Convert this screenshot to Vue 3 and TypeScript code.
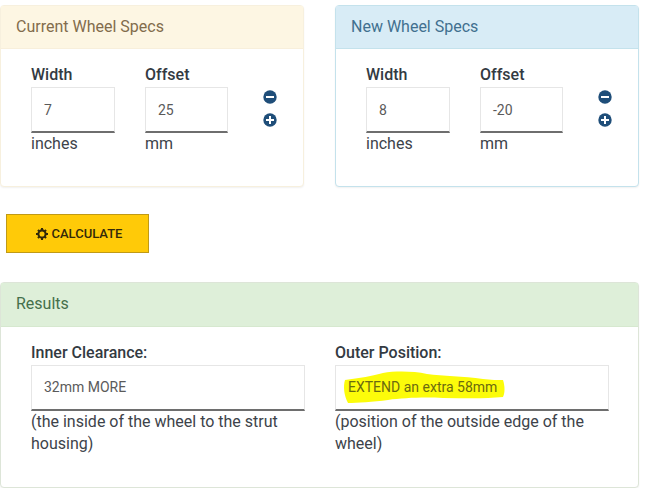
<script setup lang="ts">
import { ref } from "vue";

const specs = ref([
  { title: "Current Wheel Specs", kind: "warning", width: 7, offset: 25 },
  { title: "New Wheel Specs", kind: "info", width: 8, offset: -20 },
]);

const results = [
  { label: "Inner Clearance:", value: "32mm MORE", note: "(the inside of the wheel to the strut housing)", marked: false },
  { label: "Outer Position:", value: "EXTEND an extra 58mm", note: "(position of the outside edge of the wheel)", marked: true },
];
</script>

<template>
  <div class="page">
    <div class="spec-row">
      <section v-for="spec in specs" :key="spec.title" class="panel spec" :class="spec.kind">
        <header class="panel-head">{{ spec.title }}</header>
        <div class="spec-body">
          <div class="col col-width">
            <label>Width</label>
            <div class="field">{{ spec.width }}</div>
            <span class="unit">inches</span>
          </div>
          <div class="col col-offset">
            <label>Offset</label>
            <div class="field">{{ spec.offset }}</div>
            <span class="unit">mm</span>
          </div>
          <div class="steppers">
            <button class="step" type="button" @click="spec.offset--">
              <svg viewBox="0 0 14 14" width="14" height="14">
                <circle cx="7" cy="7" r="6.7" fill="#1f4e79" />
                <rect x="3" y="6" width="8" height="2" fill="#fff" />
              </svg>
            </button>
            <button class="step" type="button" @click="spec.offset++">
              <svg viewBox="0 0 14 14" width="14" height="14">
                <circle cx="7" cy="7" r="6.7" fill="#1f4e79" />
                <path d="M3 6h3V3h2v3h3v2H8v3H6V8H3z" fill="#fff" />
              </svg>
            </button>
          </div>
        </div>
      </section>
    </div>

    <button class="calc" type="button">
      <svg class="gear" viewBox="0 0 14 14" width="12" height="12">
        <circle cx="7" cy="7" r="4.2" fill="none" stroke="#33290a" stroke-width="2.4" />
        <path
          d="M5.8 0h2.4v2.4H5.8zM5.8 11.6h2.4V14H5.8zM0 5.8h2.4v2.4H0zM11.6 5.8H14v2.4h-2.4zM1.4 3.1 3.1 1.4 4.8 3.1 3.1 4.8zM9.2 10.9l1.7-1.7 1.7 1.7-1.7 1.7zM10.9 1.4l1.7 1.7-1.7 1.7-1.7-1.7zM3.1 9.2l1.7 1.7-1.7 1.7-1.7-1.7z"
          fill="#33290a"
        />
      </svg>
      CALCULATE
    </button>

    <section class="panel success">
      <header class="panel-head">Results</header>
      <div class="result-body">
        <div v-for="item in results" :key="item.label" class="result">
          <label>{{ item.label }}</label>
          <div class="field wide" :class="{ marked: item.marked }">
            <svg v-if="item.marked" class="marker" viewBox="0 0 162 32" width="162" height="32" preserveAspectRatio="none">
              <path
                d="M2 9C16 7 30 5 40 2 52 0 70 0 84 3 100 5 120 5 140 8 147 9 156 9 160 9 162 15 162 22 160 26 140 28 120 27 100 27 80 26 60 27 45 29 30 31 14 32 5 32 1 25 0 15 2 9Z"
                fill="#fcfc0a"
              />
            </svg>
            <span class="value">{{ item.value }}</span>
          </div>
          <p class="note">{{ item.note }}</p>
        </div>
      </div>
    </section>
  </div>
</template>

<style scoped>
.page {
  width: 639px;
  padding-top: 5px;
  font-family: Roboto, "Liberation Sans", sans-serif;
  font-size: 16px;
  color: #333a42;
}

.spec-row {
  display: grid;
  grid-template-columns: 304px 304px;
  column-gap: 31px;
}

.panel {
  border: 1px solid;
  border-radius: 4px;
  box-shadow: 0 1px 2px rgba(0, 0, 0, 0.06);
  background: #fff;
}

.panel-head {
  height: 42px;
  padding-left: 15px;
  line-height: 42px;
  border-bottom: 1px solid;
}

.warning {
  border-color: #f7f0de;
}
.warning .panel-head {
  background: #fdf6e3;
  border-bottom-color: #f8efdb;
  color: #826c4c;
}

.info {
  border-color: #c4e2ec;
}
.info .panel-head {
  background: #d8ecf6;
  border-bottom-color: #c4e2ec;
  color: #41708f;
}

.success {
  margin-top: 29px;
  border-color: #dde5d8;
}
.success .panel-head {
  height: 43px;
  line-height: 41px;
  background: #deefd9;
  border-bottom-color: #d6e8cf;
  color: #45704b;
}

.spec-body {
  display: flex;
  height: 137px;
  padding: 14px 0 0 30px;
  box-sizing: border-box;
}

.col {
  display: flex;
  flex-direction: column;
}
.col-width {
  width: 84px;
  margin-right: 30px;
}
.col-offset {
  width: 83px;
}

label {
  height: 24px;
  line-height: 24px;
  font-weight: 500;
}

.field {
  position: relative;
  box-sizing: border-box;
  height: 46px;
  padding-left: 12px;
  line-height: 44px;
  font-size: 14px;
  color: #5a5a5a;
  background: #fff;
  border: 1px solid #e6e6e6;
  border-bottom: 2px solid #6e6e6e;
}

.unit {
  line-height: 22px;
  color: #3d434a;
}

.steppers {
  display: flex;
  flex-direction: column;
  gap: 9px;
  margin: 27px 0 0 35px;
}

.step {
  display: block;
  width: 14px;
  height: 14px;
  padding: 0;
  border: 0;
  background: none;
}

.calc {
  display: flex;
  align-items: center;
  justify-content: center;
  gap: 4px;
  width: 143px;
  height: 39px;
  margin: 27px 0 0 6px;
  padding: 0 0 0 3px;
  font-family: inherit;
  font-size: 13px;
  font-weight: 500;
  color: #33290a;
  background: #ffca08;
  border: 1px solid #c09a16;
}

.gear {
  display: block;
}

.result-body {
  display: flex;
  height: 160px;
  padding: 14px 0 0 30px;
  box-sizing: border-box;
}

.result {
  width: 274px;
  margin-right: 30px;
  display: flex;
  flex-direction: column;
}

.field.wide {
  width: 274px;
  line-height: 42px;
}

.marker {
  position: absolute;
  left: 7px;
  top: 5px;
}

.value {
  position: relative;
  color: #5a5a5a;
}

.marked .value {
  color: #6b6a10;
}

.note {
  margin: 0;
  line-height: 22px;
  color: #3d434a;
}
</style>

<style>
html,
body {
  background: #fff;
}
</style>
